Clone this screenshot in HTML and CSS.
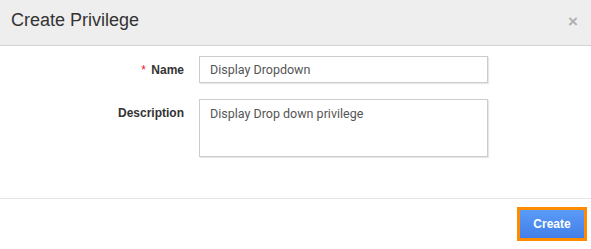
FILE: index.html
```html
<!DOCTYPE html>
<html lang="en">
<head>
  <meta charset="UTF-8" />
  <title>Create Privilege</title>
  <link rel="stylesheet" href="styles.css">
</head>
<body>
  <div class="modal">
    <div class="modal-header">
      <h4 class="modal-title">Create Privilege</h4>
      <span class="close">&times;</span>
    </div>
    <div class="modal-body">
      <div class="form-row">
        <label class="form-label"><span class="req">*</span> Name</label>
        <input class="form-input" type="text" value="Display Dropdown" />
      </div>
      <div class="form-row">
        <label class="form-label">Description</label>
        <textarea class="form-input form-area">Display Drop down privilege</textarea>
      </div>
    </div>
    <div class="modal-footer">
      <button class="btn-create">Create</button>
    </div>
  </div>
</body>
</html>
```

FILE: styles.css
```css
* { box-sizing: border-box; }
body {
  margin: 0;
  font-family: "Liberation Sans", Arial, sans-serif;
  background: #fff;
  color: #333;
}
.modal { width: 591px; height: 249px; background: #fff; }

.modal-header {
  height: 46px;
  background: #eeeeee;
  border-bottom: 1px solid #d4d4d4;
  display: flex;
  align-items: center;
  justify-content: space-between;
  padding: 0 11px 0 11px;
}
.modal-title {
  margin: 0;
  font-size: 18px;
  font-weight: normal;
  color: #333;
  position: relative;
  top: -2px;
}
.close {
  color: #b0b0b0;
  font-size: 17px;
  font-weight: bold;
  margin-right: 2px;
  position: relative;
  top: -1px;
}

.modal-body {
  padding: 10px 0 0;
  height: 153px;
  border-bottom: 1px solid #e5e5e5;
}
.form-row {
  display: flex;
  align-items: flex-start;
  margin-bottom: 16px;
}
.form-label {
  width: 184px;
  padding-right: 0;
  text-align: right;
  font-size: 12px;
  font-weight: bold;
  color: #333;
  padding-top: 7px;
  margin-right: 15px;
}
.req { color: #e8192c; font-weight: normal; margin-right: 2px; }
.form-input {
  width: 289px;
  height: 27px;
  border: 1px solid #cccccc;
  box-shadow: 1px 1px 1px #e8e8e8;
  padding: 4px 10px;
  font-family: Roboto, "Liberation Sans", sans-serif;
  font-size: 12.5px;
  color: #555;
  background: #fff;
  margin: 0;
}
.form-area {
  height: 58px;
  resize: none;
  padding-top: 6px;
  display: block;
}

.modal-footer {
  display: flex;
  justify-content: flex-end;
  padding: 8px 4px 0 0;
}
.btn-create {
  width: 70px;
  height: 34px;
  border: 3px solid #ff8c00;
  background: linear-gradient(#5a9bf7, #437fe9);
  color: #fff;
  font-family: "Liberation Sans", Arial, sans-serif;
  font-size: 12px;
  font-weight: bold;
  padding: 0;
}
```
